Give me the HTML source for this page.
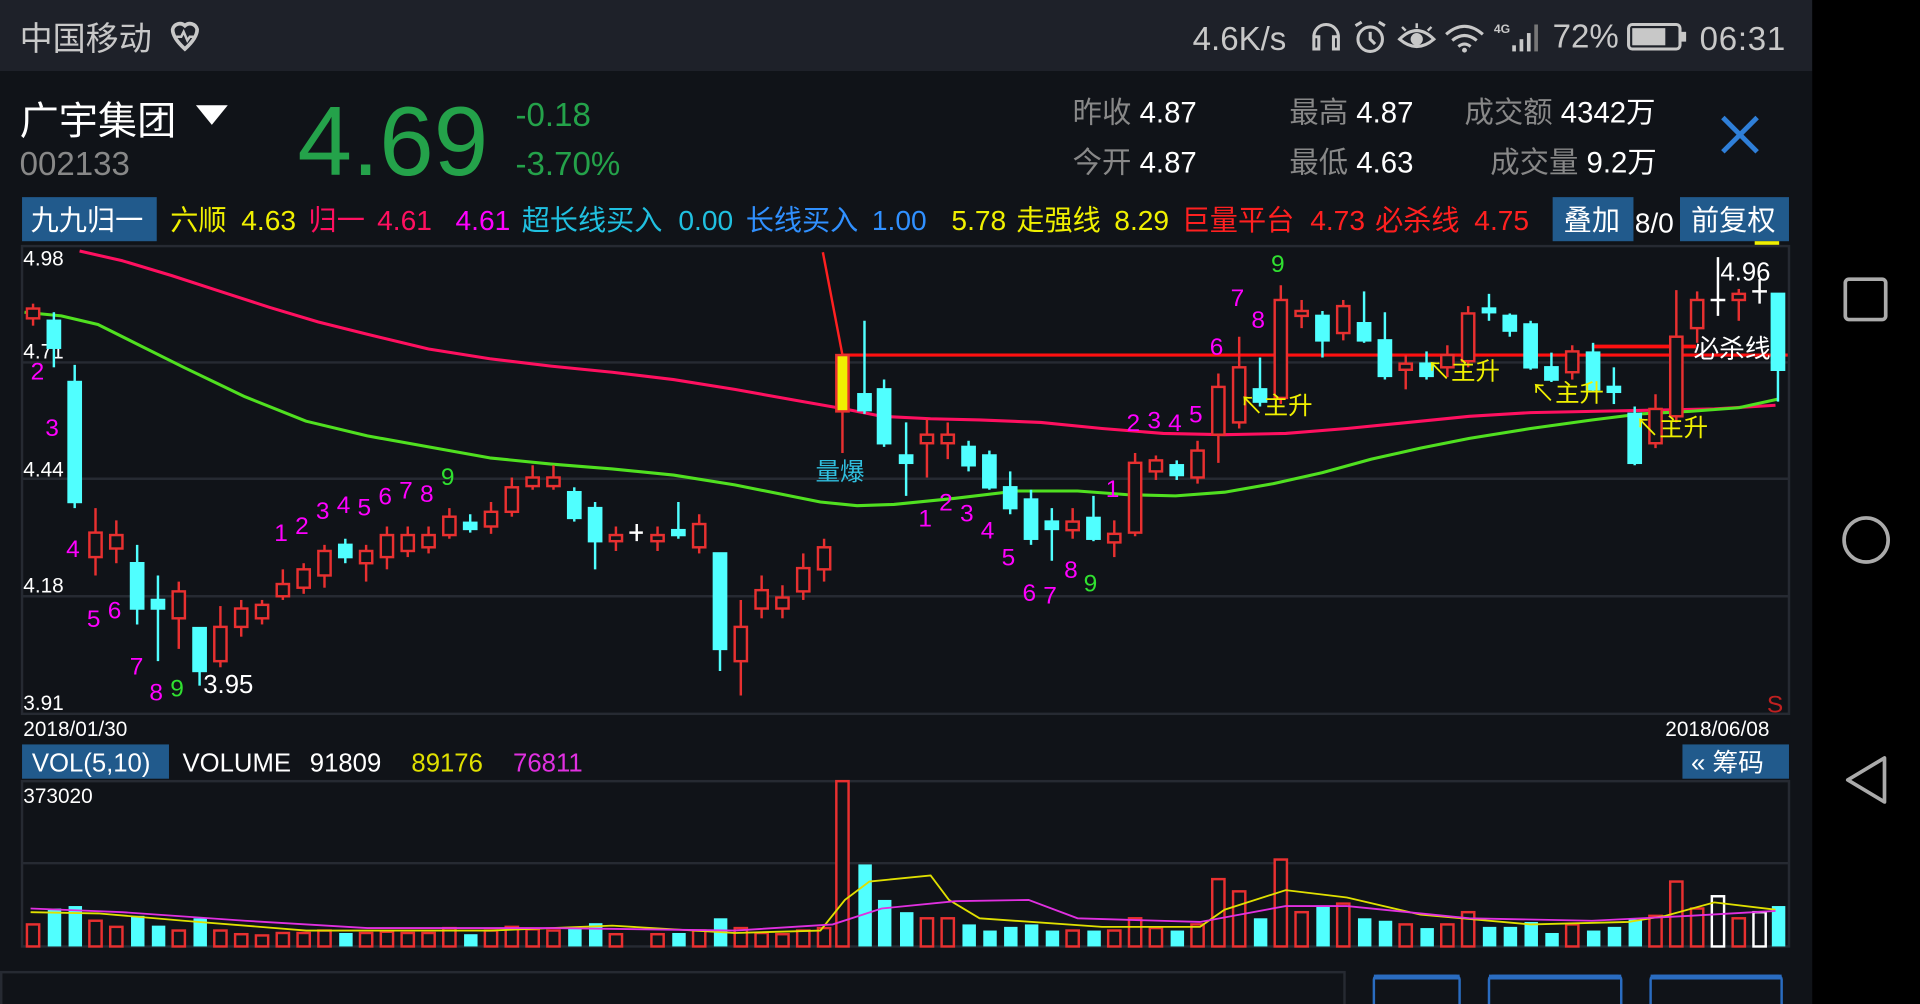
<!DOCTYPE html>
<html><head><meta charset="utf-8"><style>
html,body{margin:0;padding:0;background:#101318;overflow:hidden}
svg{display:block}
text{font-family:"Liberation Sans","Noto Sans CJK SC",sans-serif}
</style></head><body>
<svg width="1920" height="1004" viewBox="0 0 1568 820" preserveAspectRatio="none" xmlns="http://www.w3.org/2000/svg">
<rect x="0" y="0" width="1568" height="820" fill="#101318"/>
<rect x="0" y="0" width="1480" height="58" fill="#1e2129"/>
<rect x="1480" y="0" width="88" height="820" fill="#000"/>
<!-- status bar -->
<text x="16" y="41" font-size="27" fill="#c8c8c8">中国移动</text>
<path d="M141 24 a6 6 0 0 1 10 -3 a6 6 0 0 1 10 3 q0 7 -10 16 q-10 -9 -10 -16z" fill="none" stroke="#c8c8c8" stroke-width="3"/>
<path d="M142 30 h6 l2 -4 l3 7 l2 -3 h5" fill="none" stroke="#c8c8c8" stroke-width="2"/>
<text x="974" y="41" font-size="27" fill="#c8c8c8">4.6K/s</text>
<path d="M1073 38 v-8 a10 10 0 0 1 20 0 v8 M1073 30 h4 v10 h-4z M1093 30 h-4 v10 h4z" fill="none" stroke="#c8c8c8" stroke-width="2.5"/>
<circle cx="1119" cy="32" r="10" fill="none" stroke="#c8c8c8" stroke-width="2.5"/><path d="M1119 26 v6 l4 4 M1107 21 l5 -3 M1131 21 l-5 -3" stroke="#c8c8c8" stroke-width="2.5" fill="none"/>
<path d="M1143 32 q14 -14 28 0 q-14 12 -28 0z" fill="none" stroke="#c8c8c8" stroke-width="2.5"/><circle cx="1157" cy="32" r="5" fill="#c8c8c8"/><path d="M1145 22 l3 3 M1157 19 v4 M1169 22 l-3 3" stroke="#c8c8c8" stroke-width="2"/>
<path d="M1181 28 q15 -13 30 0 M1186 33 q10 -8 20 0 M1191 38 q5 -4 10 0" fill="none" stroke="#c8c8c8" stroke-width="2.5"/><circle cx="1196" cy="41" r="2" fill="#c8c8c8"/>
<text x="1220" y="27" font-size="10" fill="#c8c8c8" font-weight="bold">4G</text>
<rect x="1235" y="37" width="3" height="5" fill="#c8c8c8"/><rect x="1241" y="32" width="3" height="10" fill="#c8c8c8"/><rect x="1247" y="27" width="3" height="15" fill="#c8c8c8"/><rect x="1253" y="20" width="3" height="22" fill="#777"/>
<text x="1268" y="39" font-size="27" fill="#c8c8c8">72%</text>
<rect x="1330" y="20" width="42" height="20" rx="3" fill="none" stroke="#c8c8c8" stroke-width="2.5"/><rect x="1333" y="23" width="27" height="14" fill="#c8c8c8"/><rect x="1373" y="26" width="4" height="8" fill="#c8c8c8"/>
<text x="1388" y="41" font-size="27" fill="#c8c8c8" textLength="70">06:31</text>
<!-- nav -->
<rect x="1507" y="228" width="33" height="33" rx="3" fill="none" stroke="#aaa" stroke-width="3"/>
<circle cx="1524" cy="441" r="18" fill="none" stroke="#aaa" stroke-width="3"/>
<path d="M1539 619 v36 l-30 -18z" fill="none" stroke="#aaa" stroke-width="3" stroke-linejoin="round"/>
<!-- header -->
<text x="16" y="110" font-size="32" fill="#fff">广宇集团</text>
<path d="M160 86 h26 l-13 16z" fill="#fff"/>
<text x="16" y="143" font-size="27" fill="#888">002133</text>
<text x="243" y="143" font-size="80" fill="#24a24a">4.69</text>
<text x="421" y="103" font-size="27" fill="#24a24a">-0.18</text>
<text x="421" y="143" font-size="27" fill="#24a24a">-3.70%</text>
<g font-size="24"><text x="876" y="100" fill="#888">昨收 <tspan fill="#fff">4.87</tspan></text>
<text x="876" y="141" fill="#888">今开 <tspan fill="#fff">4.87</tspan></text>
<text x="1053" y="100" fill="#888">最高 <tspan fill="#fff">4.87</tspan></text>
<text x="1053" y="141" fill="#888">最低 <tspan fill="#fff">4.63</tspan></text>
<text x="1196" y="100" fill="#888">成交额 <tspan fill="#fff">4342万</tspan></text>
<text x="1217" y="141" fill="#888">成交量 <tspan fill="#fff">9.2万</tspan></text></g>
<path d="M1407 96 l28 28 M1435 96 l-28 28" stroke="#2f7fd8" stroke-width="4"/>
<!-- indicator row -->
<rect x="18" y="161" width="110" height="36" fill="#215a8c"/>
<text x="25" y="188" font-size="23" fill="#fff">九九归一</text>
<g font-size="23">
<text x="139" y="188" fill="#f0f000">六顺</text><text x="197" y="188" fill="#f0f000">4.63</text>
<text x="252" y="188" fill="#ff1060">归一</text><text x="308" y="188" fill="#ff1060">4.61</text>
<text x="372" y="188" fill="#ff00ff">4.61</text>
<text x="426" y="188" fill="#20c0e0">超长线买入</text><text x="554" y="188" fill="#20c0e0">0.00</text>
<text x="609" y="188" fill="#3090ff">长线买入</text><text x="712" y="188" fill="#3090ff">1.00</text>
<text x="777" y="188" fill="#f0f000">5.78</text><text x="830" y="188" fill="#f0f000">走强线</text><text x="910" y="188" fill="#f0f000">8.29</text>
<text x="965" y="188" fill="#ff2020">巨量平台</text><text x="1070" y="188" fill="#ff2020">4.73</text>
<text x="1123" y="188" fill="#ff2020">必杀线</text><text x="1204" y="188" fill="#ff2020">4.75</text>
</g>
<rect x="1268" y="161" width="66" height="36" fill="#215a8c"/><text x="1277" y="188" font-size="23" fill="#fff">叠加</text>
<text x="1335" y="190" font-size="23" fill="#fff">8/0</text>
<rect x="1372" y="161" width="89" height="36" fill="#215a8c"/><text x="1381" y="188" font-size="23" fill="#fff">前复权</text>
<rect x="1433" y="197" width="20" height="3" fill="#f0f000"/>
<!-- chart frame -->
<g stroke="#262a32" stroke-width="2" fill="none">
<rect x="18" y="201" width="1443" height="382"/>
<line x1="18" y1="296" x2="1461" y2="296"/><line x1="18" y1="391" x2="1461" y2="391"/><line x1="18" y1="487" x2="1461" y2="487"/>
<rect x="18" y="638" width="1443" height="135"/>
<line x1="18" y1="705" x2="1461" y2="705"/>
</g>
<g font-size="17" fill="#fff"><text x="19" y="217">4.98</text><text x="19" y="293">4.71</text><text x="19" y="389">4.44</text><text x="19" y="484">4.18</text><text x="19" y="580">3.91</text>
<text x="19" y="601">2018/01/30</text><text x="1360" y="601">2018/06/08</text><text x="19" y="656">373020</text></g>
<text x="1443" y="582" font-size="20" fill="#c02020">S</text>
<!-- MA lines -->
<polyline fill="none" stroke="#ff1060" stroke-width="2.5" stroke-linejoin="round" points="65,205 100,213 140,225 180,238 220,251 260,263 300,273 350,285 400,293 450,299 500,304 550,310 600,318 650,327 690,334 720,340 760,342 800,343 850,345 900,350 950,354 1000,355 1050,354 1100,350 1150,345 1200,340 1250,337 1300,336 1350,335 1400,334 1450,331"/>
<polyline fill="none" stroke="#50e020" stroke-width="2.5" stroke-linejoin="round" points="20,255 50,258 80,265 110,280 150,300 200,324 250,344 300,356 350,365 400,374 450,379 500,383 550,388 600,396 640,404 670,410 700,413 730,412 780,407 830,401 880,401 920,404 960,405 1000,402 1040,395 1080,386 1120,375 1160,366 1200,358 1250,350 1300,343 1340,338 1380,336 1420,333 1452,326"/>
<!-- key lines -->
<line x1="672" y1="206" x2="688" y2="290" stroke="#ff2020" stroke-width="2"/>
<line x1="688" y1="290" x2="1460" y2="290" stroke="#ff1010" stroke-width="2.5"/>
<line x1="1300" y1="283" x2="1385" y2="283" stroke="#ff1010" stroke-width="3"/>
<!-- candles red -->
<g stroke="#e83030" stroke-width="2" fill="#101318">
<line x1="27" y1="248" x2="27" y2="266"/><rect x="22" y="252" width="10" height="8"/>
<line x1="78" y1="415" x2="78" y2="470"/><rect x="73" y="435" width="10" height="20"/>
<line x1="95" y1="425" x2="95" y2="460"/><rect x="90" y="437" width="10" height="11"/>
<line x1="146" y1="475" x2="146" y2="530"/><rect x="141" y="483" width="10" height="22"/>
<line x1="180" y1="495" x2="180" y2="545"/><rect x="175" y="512" width="10" height="28"/>
<line x1="197" y1="490" x2="197" y2="520"/><rect x="192" y="497" width="10" height="15"/>
<line x1="214" y1="490" x2="214" y2="510"/><rect x="209" y="494" width="10" height="11"/>
<line x1="231" y1="465" x2="231" y2="490"/><rect x="226" y="477" width="10" height="10"/>
<line x1="248" y1="460" x2="248" y2="485"/><rect x="243" y="465" width="10" height="15"/>
<line x1="265" y1="445" x2="265" y2="480"/><rect x="260" y="450" width="10" height="20"/>
<line x1="299" y1="445" x2="299" y2="475"/><rect x="294" y="450" width="10" height="10"/>
<line x1="316" y1="430" x2="316" y2="465"/><rect x="311" y="437" width="10" height="18"/>
<line x1="333" y1="430" x2="333" y2="455"/><rect x="328" y="437" width="10" height="13"/>
<line x1="350" y1="430" x2="350" y2="452"/><rect x="345" y="437" width="10" height="10"/>
<line x1="367" y1="415" x2="367" y2="440"/><rect x="362" y="422" width="10" height="15"/>
<line x1="401" y1="410" x2="401" y2="436"/><rect x="396" y="418" width="10" height="12"/>
<line x1="418" y1="390" x2="418" y2="422"/><rect x="413" y="398" width="10" height="20"/>
<line x1="435" y1="380" x2="435" y2="400"/><rect x="430" y="390" width="10" height="7"/>
<line x1="452" y1="380" x2="452" y2="400"/><rect x="447" y="390" width="10" height="7"/>
<line x1="503" y1="430" x2="503" y2="450"/><rect x="498" y="437" width="10" height="5"/>
<line x1="537" y1="430" x2="537" y2="450"/><rect x="532" y="437" width="10" height="5"/>
<line x1="571" y1="420" x2="571" y2="452"/><rect x="566" y="428" width="10" height="19"/>
<line x1="605" y1="490" x2="605" y2="568"/><rect x="600" y="512" width="10" height="28"/>
<line x1="622" y1="470" x2="622" y2="505"/><rect x="617" y="482" width="10" height="15"/>
<line x1="639" y1="478" x2="639" y2="505"/><rect x="634" y="488" width="10" height="9"/>
<line x1="656" y1="452" x2="656" y2="490"/><rect x="651" y="464" width="10" height="19"/>
<line x1="673" y1="440" x2="673" y2="475"/><rect x="668" y="447" width="10" height="18"/>
<line x1="757" y1="342" x2="757" y2="390"/><rect x="752" y="355" width="10" height="7"/>
<line x1="774" y1="345" x2="774" y2="375"/><rect x="769" y="355" width="10" height="7"/>
<line x1="876" y1="415" x2="876" y2="440"/><rect x="871" y="426" width="10" height="7"/>
<line x1="910" y1="425" x2="910" y2="455"/><rect x="905" y="436" width="10" height="7"/>
<line x1="927" y1="370" x2="927" y2="438"/><rect x="922" y="378" width="10" height="57"/>
<line x1="944" y1="372" x2="944" y2="392"/><rect x="939" y="376" width="10" height="9"/>
<line x1="978" y1="360" x2="978" y2="395"/><rect x="973" y="368" width="10" height="22"/>
<line x1="995" y1="305" x2="995" y2="378"/><rect x="990" y="316" width="10" height="39"/>
<line x1="1012" y1="275" x2="1012" y2="350"/><rect x="1007" y="300" width="10" height="45"/>
<line x1="1046" y1="233" x2="1046" y2="330"/><rect x="1041" y="245" width="10" height="80"/>
<line x1="1063" y1="245" x2="1063" y2="268"/><rect x="1058" y="254" width="10" height="4"/>
<line x1="1097" y1="245" x2="1097" y2="278"/><rect x="1092" y="250" width="10" height="22"/>
<line x1="1148" y1="290" x2="1148" y2="318"/><rect x="1143" y="297" width="10" height="5"/>
<line x1="1182" y1="282" x2="1182" y2="308"/><rect x="1177" y="290" width="10" height="10"/>
<line x1="1199" y1="250" x2="1199" y2="300"/><rect x="1194" y="256" width="10" height="39"/>
<line x1="1284" y1="282" x2="1284" y2="310"/><rect x="1279" y="287" width="10" height="17"/>
<line x1="1352" y1="322" x2="1352" y2="366"/><rect x="1347" y="334" width="10" height="28"/>
<line x1="1369" y1="237" x2="1369" y2="345"/><rect x="1364" y="275" width="10" height="65"/>
<line x1="1386" y1="238" x2="1386" y2="280"/><rect x="1381" y="245" width="10" height="23"/>
<line x1="1420" y1="236" x2="1420" y2="262"/><rect x="1415" y="240" width="10" height="5"/>
</g>
<rect x="683" y="290" width="10" height="46" fill="#f0f000" stroke="#e83030" stroke-width="2"/><line x1="688" y1="336" x2="688" y2="370" stroke="#e83030" stroke-width="2"/>
<!-- candles cyan -->
<g stroke="#50ffff" stroke-width="2" fill="#50ffff">
<line x1="44" y1="255" x2="44" y2="300"/><rect x="39" y="262" width="10" height="22"/>
<line x1="61" y1="298" x2="61" y2="415"/><rect x="56" y="312" width="10" height="98"/>
<line x1="112" y1="445" x2="112" y2="510"/><rect x="107" y="460" width="10" height="37"/>
<line x1="129" y1="470" x2="129" y2="540"/><rect x="124" y="490" width="10" height="7"/>
<line x1="163" y1="513" x2="163" y2="560"/><rect x="158" y="513" width="10" height="35"/>
<line x1="282" y1="440" x2="282" y2="460"/><rect x="277" y="445" width="10" height="10"/>
<line x1="384" y1="420" x2="384" y2="435"/><rect x="379" y="427" width="10" height="5"/>
<line x1="469" y1="398" x2="469" y2="426"/><rect x="464" y="402" width="10" height="21"/>
<line x1="486" y1="410" x2="486" y2="465"/><rect x="481" y="415" width="10" height="27"/>
<line x1="554" y1="410" x2="554" y2="440"/><rect x="549" y="433" width="10" height="4"/>
<line x1="588" y1="452" x2="588" y2="548"/><rect x="583" y="452" width="10" height="78"/>
<line x1="706" y1="262" x2="706" y2="338"/><rect x="701" y="322" width="10" height="13"/>
<line x1="722" y1="310" x2="722" y2="365"/><rect x="717" y="318" width="10" height="44"/>
<line x1="740" y1="345" x2="740" y2="405"/><rect x="735" y="372" width="10" height="6"/>
<line x1="791" y1="360" x2="791" y2="385"/><rect x="786" y="365" width="10" height="15"/>
<line x1="808" y1="368" x2="808" y2="400"/><rect x="803" y="372" width="10" height="26"/>
<line x1="825" y1="385" x2="825" y2="420"/><rect x="820" y="398" width="10" height="17"/>
<line x1="842" y1="400" x2="842" y2="445"/><rect x="837" y="408" width="10" height="32"/>
<line x1="859" y1="415" x2="859" y2="458"/><rect x="854" y="426" width="10" height="6"/>
<line x1="893" y1="405" x2="893" y2="442"/><rect x="888" y="423" width="10" height="17"/>
<line x1="961" y1="376" x2="961" y2="392"/><rect x="956" y="380" width="10" height="8"/>
<line x1="1029" y1="292" x2="1029" y2="332"/><rect x="1024" y="318" width="10" height="10"/>
<line x1="1080" y1="254" x2="1080" y2="292"/><rect x="1075" y="258" width="10" height="20"/>
<line x1="1114" y1="238" x2="1114" y2="280"/><rect x="1109" y="264" width="10" height="14"/>
<line x1="1131" y1="255" x2="1131" y2="310"/><rect x="1126" y="278" width="10" height="29"/>
<line x1="1165" y1="287" x2="1165" y2="310"/><rect x="1160" y="297" width="10" height="10"/>
<line x1="1216" y1="240" x2="1216" y2="262"/><rect x="1211" y="252" width="10" height="3"/>
<line x1="1233" y1="256" x2="1233" y2="275"/><rect x="1228" y="258" width="10" height="12"/>
<line x1="1250" y1="262" x2="1250" y2="302"/><rect x="1245" y="265" width="10" height="35"/>
<line x1="1267" y1="288" x2="1267" y2="312"/><rect x="1262" y="300" width="10" height="10"/>
<line x1="1301" y1="280" x2="1301" y2="320"/><rect x="1296" y="288" width="10" height="30"/>
<line x1="1318" y1="300" x2="1318" y2="330"/><rect x="1313" y="316" width="10" height="4"/>
<line x1="1335" y1="332" x2="1335" y2="380"/><rect x="1330" y="338" width="10" height="40"/>
<line x1="1452" y1="240" x2="1452" y2="328"/><rect x="1447" y="240" width="10" height="62"/>
</g>
<g stroke="#fff" stroke-width="2"><path d="M514 435 h11 M520 428 v14 M1397 245 h12 M1403 210 v48 M1431 238 h12 M1437 228 v20"/></g>
<!-- labels -->
<g font-size="20" fill="#ff00ff">
<text x="25" y="310">2</text><text x="37" y="356">3</text><text x="54" y="455">4</text><text x="71" y="512">5</text><text x="88" y="505">6</text><text x="106" y="551">7</text><text x="122" y="572">8</text>
<text x="224" y="442">1</text><text x="241" y="436">2</text><text x="258" y="424">3</text><text x="275" y="419">4</text><text x="292" y="421">5</text><text x="309" y="412">6</text><text x="326" y="407">7</text><text x="343" y="410">8</text>
<text x="750" y="430">1</text><text x="767" y="417">2</text><text x="784" y="426">3</text><text x="801" y="440">4</text><text x="818" y="462">5</text><text x="835" y="491">6</text><text x="852" y="493">7</text><text x="869" y="472">8</text>
<text x="903" y="406">1</text><text x="920" y="352">2</text><text x="937" y="350">3</text><text x="954" y="352">4</text><text x="971" y="345">5</text><text x="988" y="290">6</text><text x="1005" y="250">7</text><text x="1022" y="268">8</text>
</g>
<g font-size="20" fill="#30e030"><text x="139" y="569">9</text><text x="360" y="396">9</text><text x="885" y="483">9</text><text x="1038" y="222">9</text></g>
<text x="166" y="566" font-size="21" fill="#fff">3.95</text>
<text x="1405" y="229" font-size="21" fill="#fff">4.96</text>
<text x="666" y="392" font-size="20" fill="#30c0e0">量爆</text>
<text x="1383" y="292" font-size="21" fill="#fff">必杀线</text>
<g font-size="20" fill="#f0f000"><text x="1012" y="338">↖主升</text><text x="1165" y="310">↖主升</text><text x="1250" y="328">↖主升</text><text x="1335" y="356">↖主升</text></g>
<!-- VOL row -->
<rect x="18" y="608" width="120" height="28" fill="#215a8c"/>
<text x="26" y="630" font-size="21" fill="#fff">VOL(5,10)</text>
<g font-size="21"><text x="149" y="630" fill="#fff">VOLUME</text><text x="253" y="630" fill="#fff">91809</text><text x="336" y="630" fill="#e0e000">89176</text><text x="419" y="630" fill="#e030e0">76811</text></g>
<rect x="1374" y="608" width="87" height="28" fill="#215a8c"/>
<text x="1381" y="630" font-size="21" fill="#fff">« 筹码</text>
<!-- volume bars -->
<g stroke="#e83030" stroke-width="2" fill="#101318">
<rect x="22" y="755" width="10" height="18"/><rect x="73" y="752" width="10" height="21"/><rect x="90" y="757" width="10" height="16"/><rect x="141" y="760" width="10" height="13"/><rect x="175" y="760" width="10" height="13"/><rect x="192" y="763" width="10" height="10"/><rect x="209" y="764" width="10" height="9"/><rect x="226" y="762" width="10" height="11"/><rect x="243" y="762" width="10" height="11"/><rect x="260" y="760" width="10" height="13"/><rect x="294" y="762" width="10" height="11"/><rect x="311" y="761" width="10" height="12"/><rect x="328" y="762" width="10" height="11"/><rect x="345" y="762" width="10" height="11"/><rect x="362" y="758" width="10" height="15"/><rect x="396" y="760" width="10" height="13"/><rect x="413" y="757" width="10" height="16"/><rect x="430" y="759" width="10" height="14"/><rect x="447" y="760" width="10" height="13"/><rect x="498" y="763" width="10" height="10"/><rect x="532" y="763" width="10" height="10"/><rect x="566" y="760" width="10" height="13"/><rect x="600" y="758" width="10" height="15"/><rect x="617" y="762" width="10" height="11"/><rect x="634" y="763" width="10" height="10"/><rect x="651" y="760" width="10" height="13"/><rect x="668" y="758" width="10" height="15"/><rect x="683" y="638" width="10" height="135"/><rect x="752" y="750" width="10" height="23"/><rect x="769" y="750" width="10" height="23"/><rect x="871" y="760" width="10" height="13"/><rect x="905" y="760" width="10" height="13"/><rect x="922" y="750" width="10" height="23"/><rect x="939" y="758" width="10" height="15"/><rect x="973" y="755" width="10" height="18"/><rect x="990" y="718" width="10" height="55"/><rect x="1007" y="728" width="10" height="45"/><rect x="1041" y="702" width="10" height="71"/><rect x="1058" y="745" width="10" height="28"/><rect x="1092" y="738" width="10" height="35"/><rect x="1143" y="755" width="10" height="18"/><rect x="1177" y="755" width="10" height="18"/><rect x="1194" y="745" width="10" height="28"/><rect x="1279" y="755" width="10" height="18"/><rect x="1347" y="748" width="10" height="25"/><rect x="1364" y="720" width="10" height="53"/><rect x="1381" y="742" width="10" height="31"/><rect x="1415" y="750" width="10" height="23"/>
</g>
<g fill="#50ffff">
<rect x="39" y="742" width="11" height="31"/><rect x="56" y="740" width="11" height="33"/><rect x="107" y="748" width="11" height="25"/><rect x="124" y="756" width="11" height="17"/><rect x="158" y="750" width="11" height="23"/><rect x="277" y="762" width="11" height="11"/><rect x="379" y="763" width="11" height="10"/><rect x="464" y="757" width="11" height="16"/><rect x="481" y="754" width="11" height="19"/><rect x="549" y="762" width="11" height="11"/><rect x="583" y="750" width="11" height="23"/><rect x="701" y="706" width="11" height="67"/><rect x="717" y="735" width="11" height="38"/><rect x="735" y="745" width="11" height="28"/><rect x="786" y="755" width="11" height="18"/><rect x="803" y="760" width="11" height="13"/><rect x="820" y="757" width="11" height="16"/><rect x="837" y="755" width="11" height="18"/><rect x="854" y="760" width="11" height="13"/><rect x="888" y="760" width="11" height="13"/><rect x="956" y="760" width="11" height="13"/><rect x="1024" y="750" width="11" height="23"/><rect x="1075" y="740" width="11" height="33"/><rect x="1109" y="750" width="11" height="23"/><rect x="1126" y="752" width="11" height="21"/><rect x="1160" y="758" width="11" height="15"/><rect x="1211" y="757" width="11" height="16"/><rect x="1228" y="757" width="11" height="16"/><rect x="1245" y="753" width="11" height="20"/><rect x="1262" y="762" width="11" height="11"/><rect x="1296" y="760" width="11" height="13"/><rect x="1313" y="757" width="11" height="16"/><rect x="1330" y="751" width="11" height="22"/><rect x="1447" y="740" width="11" height="33"/>
</g>
<g stroke="#fff" stroke-width="2" fill="#101318"><rect x="1398" y="732" width="10" height="41"/><rect x="1432" y="745" width="10" height="28"/></g>
<polyline fill="none" stroke="#e0e000" stroke-width="1.5" points="25,745 80,746 150,752 250,760 400,760 500,756 600,762 670,760 690,735 710,720 760,715 775,735 800,750 900,757 980,757 1000,743 1050,727 1100,733 1160,747 1250,755 1330,753 1360,748 1400,737 1450,743"/>
<polyline fill="none" stroke="#e030e0" stroke-width="1.5" points="25,742 100,745 200,752 300,758 450,758 600,760 680,755 720,742 780,736 840,735 880,750 980,753 1050,740 1100,740 1200,750 1300,752 1380,748 1450,744"/>
<!-- bottom -->
<rect x="1" y="794" width="1097" height="30" fill="none" stroke="#262a32" stroke-width="2"/>
<g stroke="#2a6cc0" stroke-width="2" fill="none"><rect x="1122" y="797" width="70" height="30" rx="3"/><rect x="1216" y="797" width="108" height="30" rx="3"/><rect x="1348" y="797" width="107" height="30" rx="3"/></g>
<g fill="#2a6cc0"><rect x="1122" y="796" width="70" height="4"/><rect x="1216" y="796" width="108" height="4"/><rect x="1348" y="796" width="107" height="4"/></g>
</svg>
</body></html>
